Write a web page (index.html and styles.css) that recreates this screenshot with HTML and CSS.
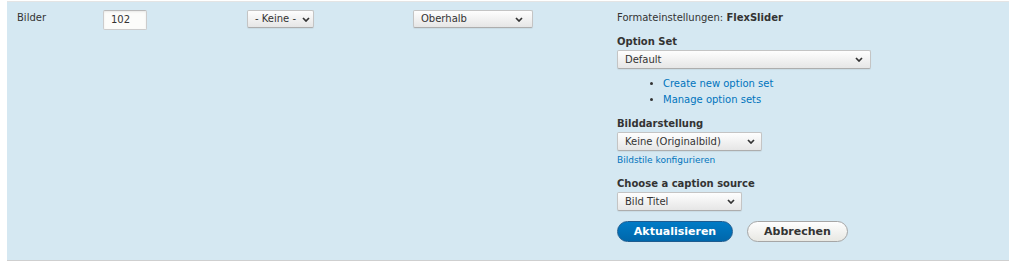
FILE: index.html
```html
<!DOCTYPE html>
<html lang="de">
<head>
    <meta charset="UTF-8">
    <title>Felder verwalten</title>
    <link rel="stylesheet" href="styles.css">
</head>
<body>
<div class="field-row">
    <div class="cell cell-label">Bilder</div>

    <div class="cell">
        <div class="text-input">102</div>
    </div>

    <div class="cell">
        <div class="select select-keine">
            <span>- Keine -</span>
            <svg class="chevron" width="8" height="5" viewBox="0 0 8 5"><path d="M1 1 L4 4 L7 1" /></svg>
        </div>
    </div>

    <div class="cell">
        <div class="select select-label">
            <span>Oberhalb</span>
            <svg class="chevron" width="8" height="5" viewBox="0 0 8 5"><path d="M1 1 L4 4 L7 1" /></svg>
        </div>
    </div>

    <div class="cell cell-settings">
        <div class="format-summary">Formateinstellungen: <strong>FlexSlider</strong></div>

        <div class="form-item">
            <div class="form-label">Option Set</div>
            <div class="select select-optionset">
                <span>Default</span>
                <svg class="chevron" width="8" height="5" viewBox="0 0 8 5"><path d="M1 1 L4 4 L7 1" /></svg>
            </div>
            <ul class="links">
                <li><a href="#">Create new option set</a></li>
                <li><a href="#">Manage option sets</a></li>
            </ul>
        </div>

        <div class="form-item form-item-tight">
            <div class="form-label">Bilddarstellung</div>
            <div class="select select-style">
                <span>Keine (Originalbild)</span>
                <svg class="chevron" width="8" height="5" viewBox="0 0 8 5"><path d="M1 1 L4 4 L7 1" /></svg>
            </div>
            <div class="description"><a href="#">Bildstile konfigurieren</a></div>
        </div>

        <div class="form-item">
            <div class="form-label">Choose a caption source</div>
            <div class="select select-caption">
                <span>Bild Titel</span>
                <svg class="chevron" width="8" height="5" viewBox="0 0 8 5"><path d="M1 1 L4 4 L7 1" /></svg>
            </div>
        </div>

        <div class="actions">
            <button class="button button-primary">Aktualisieren</button>
            <button class="button">Abbrechen</button>
        </div>
    </div>
</div>
</body>
</html>
```

FILE: styles.css
```css
body {
    margin: 0;
    padding: 1px 15px 0 7px;
    background: #fff;
    font-family: "DejaVu Sans", Verdana, sans-serif;
    font-size: 10px;
    color: #333;
}

.field-row {
    display: grid;
    grid-template-columns: 86px 144px 166px 204px 1fr;
    background-color: #d5e8f2;
    border-top: 1px solid #e4e4e4;
    border-bottom: 1px solid #cfcfcf;
    height: 260px;
    box-sizing: border-box;
}

.cell {
    padding: 8px 0 18px 10px;
    line-height: 15px;
}

.cell-label {
    color: #333;
}

.text-input {
    width: 44px;
    height: 20px;
    box-sizing: border-box;
    padding: 0 7px;
    line-height: 18px;
    background: #fcfcfa;
    border: 1px solid #ccc;
    border-top-color: #b9b9b9;
    border-radius: 2px;
    box-shadow: inset 0 1px 2px rgba(0, 0, 0, 0.08);
    color: #333;
}

.select {
    display: flex;
    align-items: center;
    justify-content: space-between;
    height: 18px;
    box-sizing: border-box;
    padding: 0 6px 0 7px;
    background: linear-gradient(#fefefe, #e6e6e6);
    border: 1px solid #c4c4c4;
    border-bottom-color: #adadad;
    border-radius: 2px;
    box-shadow: 0 1px 1px rgba(0, 0, 0, 0.06);
    color: #333;
    line-height: 16px;
}

.chevron {
    flex: none;
}

.chevron path {
    fill: none;
    stroke: #333;
    stroke-width: 1.7;
}

.select-keine {
    width: 67px;
    padding-right: 3px;
}

.select-label {
    width: 120px;
    padding-right: 9px;
}

.select-optionset {
    width: 254px;
    height: 19px;
    padding-right: 7px;
}

.select-style {
    width: 145px;
    height: 19px;
}

.select-caption {
    width: 125px;
    height: 19px;
}

.format-summary strong {
    font-weight: bold;
}

.form-item {
    margin-top: 9px;
}

.form-item-tight {
    margin-top: 8px;
}

.form-label {
    font-weight: bold;
    margin-bottom: 1px;
}

.links {
    margin: 7px 0 0 0;
    padding-left: 46px;
    list-style: disc;
}

.links li {
    line-height: 16px;
}

a {
    color: #0074bd;
    text-decoration: none;
}

.description {
    margin-top: 2px;
    font-size: 9px;
    line-height: 14px;
}

.actions {
    display: flex;
    gap: 14px;
    margin-top: 10px;
}

.button {
    height: 21px;
    width: 101px;
    padding: 0;
    font-family: "DejaVu Sans", Verdana, sans-serif;
    font-size: 11px;
    font-weight: bold;
    color: #333;
    background: linear-gradient(#fefefe, #e8e8e3);
    border: 1px solid #a6a6a6;
    border-radius: 11px;
    cursor: pointer;
}

.button-primary {
    width: 116px;
    color: #fff;
    background: linear-gradient(#007bc6, #0067ab);
    border-color: #1e5c90;
}
```
